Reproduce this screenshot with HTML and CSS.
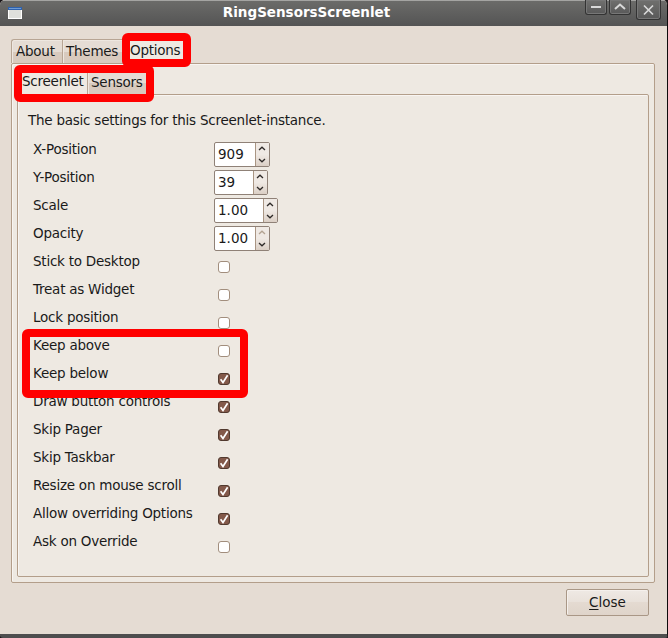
FILE: index.html
```html
<!DOCTYPE html>
<html lang="en">
<head>
<meta charset="utf-8">
<title>RingSensorsScreenlet</title>
<link rel="stylesheet" href="styles.css">
</head>
<body>
<svg class="defs" width="0" height="0" aria-hidden="true">
  <symbol id="up" viewBox="0 0 8 5"><path d="M1 4 4 1.2 7 4"/></symbol>
  <symbol id="down" viewBox="0 0 8 5"><path d="M1 1 4 3.8 7 1"/></symbol>
  <symbol id="check" viewBox="0 0 12 12"><path d="M2.6 6.2 5 9.5 9.6 2.2"/></symbol>
</svg>
<div class="window">
  <header class="titlebar">
    <svg class="app-icon" width="14" height="12" viewBox="0 0 14 12"><rect width="14" height="12" fill="#fff"/><rect width="14" height="3" fill="#2f62ad"/><rect y="1" x="1" width="12" height="1" fill="#6f9bd4"/><rect x="1" y="3" width="12" height="8" fill="#dfe0dc"/></svg>
    <h1 class="title">RingSensorsScreenlet</h1>
    <div class="controls">
      <button class="control minimize"><svg width="22" height="15" viewBox="0 0 22 15"><path d="M6 7H16"/></svg></button>
      <button class="control maximize"><svg width="22" height="15" viewBox="0 0 22 15"><path d="M6 9 11 4.5 16 9"/></svg></button>
      <button class="control close"><svg width="25" height="20" viewBox="0 0 25 20"><path d="M8 5.5 17 14.5M17 5.5 8 14.5"/></svg></button>
    </div>
  </header>
  <main class="content">
    <nav class="tabs outer-tabs">
      <span class="tab about">About</span><span class="tab themes">Themes</span><span class="tab active options">Options</span>
    </nav>
    <section class="panel outer-panel">
      <nav class="tabs inner-tabs">
        <span class="tab active screenlet">Screenlet</span><span class="tab sensors">Sensors</span>
      </nav>
      <section class="panel inner-panel">
        <p class="intro">The basic settings for this Screenlet-instance.</p>
        <div class="row"><span class="label">X-Position</span><span class="spin"><span class="value w41">909</span><span class="steps"><svg><use href="#up"/></svg><svg><use href="#down"/></svg></span></span></div>
        <div class="row"><span class="label">Y-Position</span><span class="spin"><span class="value w39">39</span><span class="steps"><svg><use href="#up"/></svg><svg><use href="#down"/></svg></span></span></div>
        <div class="row"><span class="label">Scale</span><span class="spin"><span class="value w49">1.00</span><span class="steps"><svg><use href="#up"/></svg><svg><use href="#down"/></svg></span></span></div>
        <div class="row"><span class="label">Opacity</span><span class="spin"><span class="value w41">1.00</span><span class="steps"><svg class="disabled"><use href="#up"/></svg><svg><use href="#down"/></svg></span></span></div>
        <div class="row"><span class="label">Stick to Desktop</span><span class="box"></span></div>
        <div class="row"><span class="label">Treat as Widget</span><span class="box"></span></div>
        <div class="row"><span class="label">Lock position</span><span class="box"></span></div>
        <div class="row"><span class="label">Keep above</span><span class="box"></span></div>
        <div class="row"><span class="label">Keep below</span><span class="box checked"><svg><use href="#check"/></svg></span></div>
        <div class="row"><span class="label">Draw button controls</span><span class="box checked"><svg><use href="#check"/></svg></span></div>
        <div class="row"><span class="label">Skip Pager</span><span class="box checked"><svg><use href="#check"/></svg></span></div>
        <div class="row"><span class="label">Skip Taskbar</span><span class="box checked"><svg><use href="#check"/></svg></span></div>
        <div class="row"><span class="label">Resize on mouse scroll</span><span class="box checked"><svg><use href="#check"/></svg></span></div>
        <div class="row"><span class="label">Allow overriding Options</span><span class="box checked"><svg><use href="#check"/></svg></span></div>
        <div class="row"><span class="label">Ask on Override</span><span class="box"></span></div>
      </section>
    </section>
    <footer class="actions"><button class="close-button"><span><u>C</u>lose</span></button></footer>
  </main>
  <div class="mark mark-options"></div>
  <div class="mark mark-subtabs"></div>
  <div class="mark mark-keep"></div>
</div>
</body>
</html>
```
FILE: styles.css
```css
* { box-sizing: border-box; }
body {
  margin: 0;
  background: #171216;
  color: #1a1a1a;
  font: 13.5px/16px "DejaVu Sans", sans-serif;
  letter-spacing: -0.24px;
  overflow: hidden;
}
.defs { position: absolute; }
svg { display: block; fill: none; }
button { font: inherit; color: inherit; padding: 0; margin: 0; }

.window {
  position: relative;
  display: flex;
  flex-direction: column;
  width: 668px;
  height: 638px;
  background: #e5dcd3;
  border-right: 1px solid #0d0b0c;
  border-bottom: 4px solid #4e4e4e;
  border-radius: 5px 5px 3px 3px;
  overflow: hidden;
}

.titlebar {
  display: grid;
  grid-template-columns: 90px 1fr 90px;
  flex: none;
  height: 26px;
  padding-left: 8px;
  border-top: 1px solid #a4a4a2;
  background: linear-gradient(#6b6b69, #545454);
}
.app-icon { margin-top: 6px; }
.title {
  margin: 3px 0 0 -62px;
  font-size: 13.5px;
  font-weight: bold;
  letter-spacing: 0;
  line-height: 16px;
  text-align: center;
  white-space: nowrap;
  color: #fff;
}
.controls { display: flex; align-items: flex-start; justify-content: flex-end; gap: 2px; padding-right: 6px; margin-top: -1px; }
.control {
  flex: none;
  width: 22px;
  height: 15px;
  border: 1px solid #333;
  border-top: 0;
  border-radius: 0 0 3px 3px;
  background: linear-gradient(#70706e, #595959);
  box-shadow: inset 0 0 0 1px #777;
}
.control.close { width: 25px; height: 20px; margin-left: 3px; }
.control svg { margin-left: -1px; stroke: #d9d9d9; stroke-width: 2; }
.control.close svg { stroke-width: 1.7; }

.content { padding: 11px 12px 0 11px; }
.tabs { display: flex; align-items: flex-end; }
.tab {
  flex: none;
  height: 24px;
  padding: 3px 0 0 4px;
  border: 1px solid #b7a594;
  border-bottom: 0;
  border-right: 0;
  background: linear-gradient(#e5dcd4 50%, #d8cabe 51%);
  box-shadow: inset 1px 1px #eee7e0;
}
.tab.active { background: #eee9e2; }
.outer-tabs { height: 26px; }
.about { width: 51px; border-radius: 3px 0 0 0; }
.themes { width: 63px; padding-left: 3px; }
.options { width: 60px; height: 26px; padding-top: 4px; }
.screenlet { width: 70px; height: 26px; padding-top: 4px; }
.sensors { width: 62px; height: 24px; padding: 3px 0 0 3px; }
.panel {
  border: 1px solid #b39e8a;
  border-radius: 2px;
  background: #eee9e2;
  box-shadow: inset 1px 1px #f8f5f2;
}
.outer-panel { height: 520px; padding: 4px 5px 5px; }
.inner-tabs { height: 26px; }
.inner-panel { height: 483px; padding: 17px 10px 0; }
.intro { margin: 0 0 13px; }

.row {
  display: grid;
  grid-template-columns: 181px 1fr;
  height: 28px;
  padding-left: 5px;
  white-space: nowrap;
}
.spin {
  display: flex;
  justify-self: start;
  height: 25px;
  margin-top: 1px;
  border: 1px solid #8f8177;
  border-radius: 2px;
  background: #fff;
}
.value { padding: 3px 0 0 3px; letter-spacing: 0; }
.w39 { width: 38px; }
.w41 { width: 40px; }
.w49 { width: 48px; }
.steps {
  display: flex;
  flex-direction: column;
  gap: 7px;
  width: 14px;
  padding: 3px 0 0 2px;
  border-left: 1px solid #a99583;
  background: linear-gradient(#efe9e4 50%, #dbcfc5);
}
.steps svg { width: 8px; height: 5px; stroke: #2e2a28; stroke-width: 1.3; }
.steps .disabled { stroke: #b3a392; }

.box {
  width: 12px;
  height: 12px;
  margin: 8px 0 0 4px;
  border: 1px solid #a28e7d;
  border-radius: 3px;
  background: #fff;
}
.box.checked { border-color: #51392e; background: #83594a; }
.box svg { width: 12px; height: 12px; margin: -1px; stroke: #fff; stroke-width: 1.7; }

.actions { display: flex; justify-content: flex-end; padding: 6px 6px 0 0; }
.close-button {
  width: 83px;
  height: 27px;
  padding-bottom: 2px;
  border: 1px solid #a99786;
  border-radius: 2px;
  background: linear-gradient(#efe9e4, #e9e1da 48%, #e4dad1 50%, #dfd4ca);
  box-shadow: inset 1px 1px #f5f0ec;
}
.close-button u { text-underline-offset: 2px; }

/* Hand-drawn highlight frames over the dialog */
.mark { position: absolute; border: 8px solid #f00; border-radius: 6px; }
.mark-options { left: 122px; top: 33px; width: 69px; height: 34px; }
.mark-subtabs { left: 14px; top: 65px; width: 140px; height: 37px; }
.mark-keep { left: 22px; top: 329px; width: 226px; height: 69px; }
```
